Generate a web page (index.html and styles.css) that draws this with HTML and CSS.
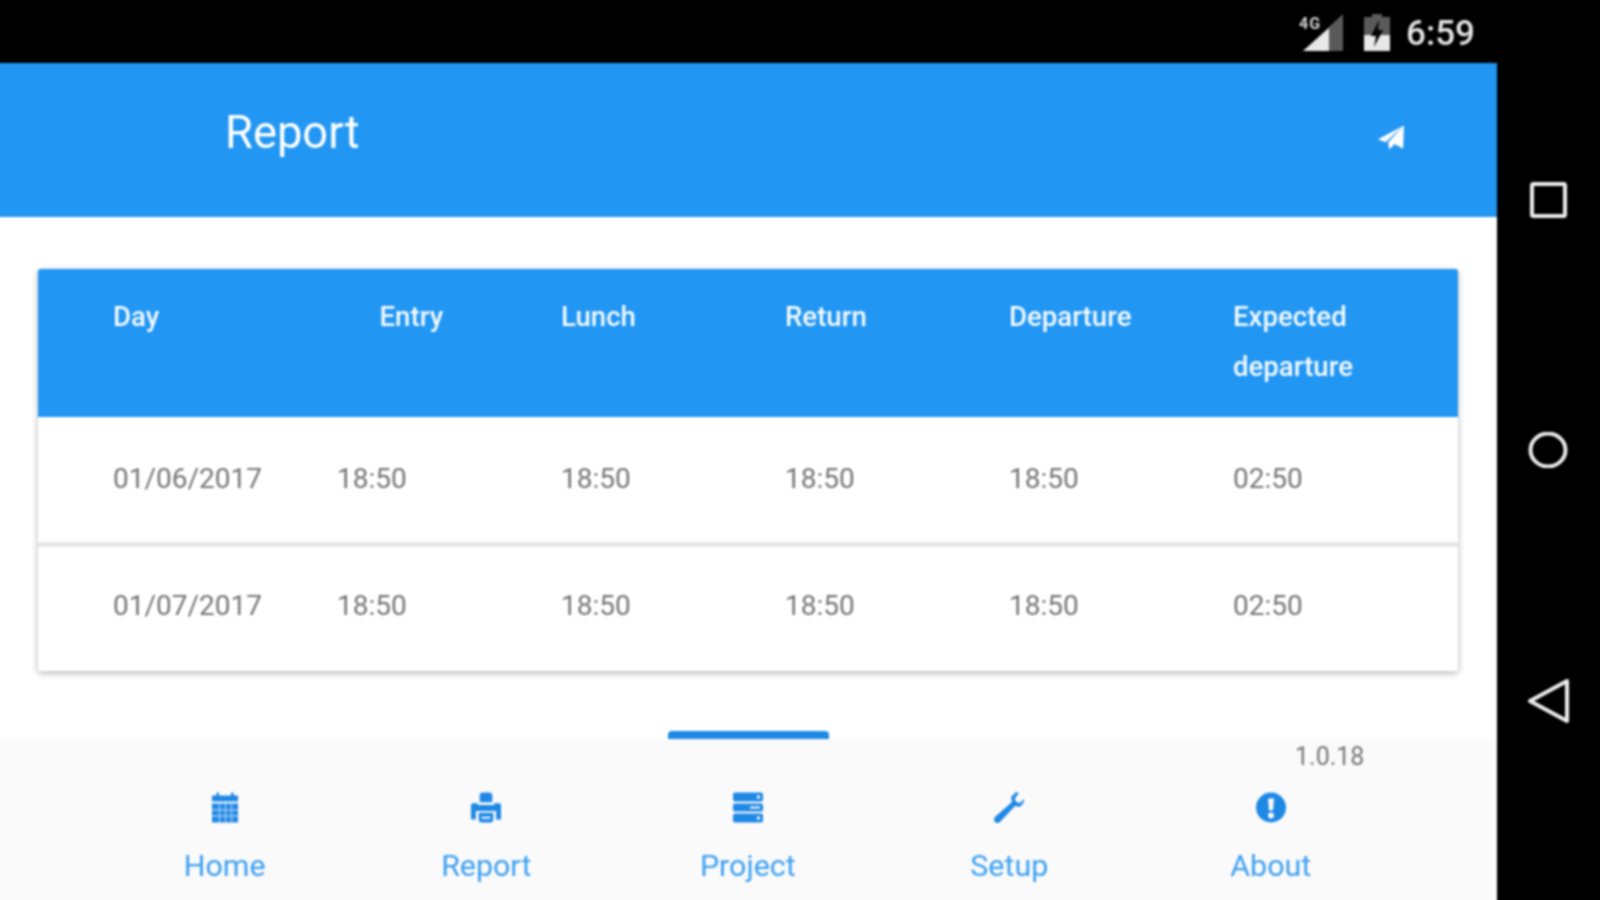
FILE: index.html
```html
<!DOCTYPE html>
<html lang="en">
<head>
<meta charset="utf-8">
<title>Report</title>
<link rel="stylesheet" href="styles.css">
</head>
<body>
<div class="device">
  <main class="screen">
    <div class="status">
      <svg class="sig" viewBox="0 0 44 37" aria-hidden="true">
        <path class="dim" d="M44 0V37H4Z"/>
        <path class="lit" d="M30 14V37H4L30 14Z"/>
        <text class="net" x="0" y="15">4G</text>
      </svg>
      <svg class="bat" viewBox="0 0 26 37" aria-hidden="true">
        <path class="dim" d="M8 0H18V3H26V37H0V3H8Z"/>
        <path class="lit" d="M0 21H26V37H0Z"/>
        <path class="bolt" d="M15 6 7 22H12L10 33 19 16H14Z"/>
      </svg>
      <span class="time">6:59</span>
    </div>
    <header class="bar">
      <h1 class="title">Report</h1>
      <svg class="send" viewBox="0 0 28 26" aria-hidden="true">
        <path d="M28 0 27 25 18 20 12 26 11 18ZM28 0 0 15 8 18Z"/>
      </svg>
    </header>
    <section class="content">
      <div class="card">
        <div class="row head">
          <div class="cell">Day</div>
          <div class="cell shift">Entry</div>
          <div class="cell">Lunch</div>
          <div class="cell">Return</div>
          <div class="cell">Departure</div>
          <div class="cell">Expected<br>departure</div>
        </div>
        <div class="row body">
          <div class="cell">01/06/2017</div>
          <div class="cell">18:50</div>
          <div class="cell">18:50</div>
          <div class="cell">18:50</div>
          <div class="cell">18:50</div>
          <div class="cell">02:50</div>
        </div>
        <div class="row body">
          <div class="cell">01/07/2017</div>
          <div class="cell">18:50</div>
          <div class="cell">18:50</div>
          <div class="cell">18:50</div>
          <div class="cell">18:50</div>
          <div class="cell">02:50</div>
        </div>
      </div>
      <div class="indicator"></div>
    </section>
    <nav class="tabs">
      <span class="version">1.0.18</span>
      <div class="tablist">
        <a class="tab">
          <svg class="icon" viewBox="0 0 30 30" aria-hidden="true">
            <path d="M2 3H6L7 0H9V3H21V0H23L24 3H28V9H2Z"/>
            <path d="M2 11H28V30H2Z"/>
            <path class="gridlines" d="M2 17.5H28M2 23.5H28M9.5 11V30M15.5 11V30M21.5 11V30"/>
          </svg>
          <span>Home</span>
        </a>
        <a class="tab">
          <svg class="icon" viewBox="0 0 31 31" aria-hidden="true">
            <path d="M9 3Q9 0 12 0H19Q22 0 22 3V10H9Z"/>
            <path d="M2 11H7V13H24V11H29Q31 11 31 13V28H26V19H5V28H0V13Q0 11 2 11Z"/>
            <path d="M8 21H23V28Q23 31 20 31H11Q8 31 8 28ZM11 25V27H20V25Z" fill-rule="evenodd"/>
          </svg>
          <span>Report</span>
        </a>
        <a class="tab">
          <svg class="icon" viewBox="0 0 30 30" aria-hidden="true">
            <path d="M2 0H28Q30 0 30 2V7Q30 9 28 9H2Q0 9 0 7V2Q0 0 2 0ZM24 3V6H27V3Z" fill-rule="evenodd"/>
            <path d="M2 11H28Q30 11 30 13V17Q30 19 28 19H2Q0 19 0 17V13Q0 11 2 11ZM17 14V16H27V14Z" fill-rule="evenodd"/>
            <path d="M2 21H28Q30 21 30 23V28Q30 30 28 30H2Q0 30 0 28V23Q0 21 2 21ZM24 24V27H27V24Z" fill-rule="evenodd"/>
          </svg>
          <span>Project</span>
        </a>
        <a class="tab">
          <svg class="icon" viewBox="0 0 30 31" aria-hidden="true">
            <path d="M22 0 17 5 18 10 1 25Q-1 28 1 30 3 32 6 30L21 14 26 15 30 10 30 7 26 11 22 10 21 6 25 1Z"/>
          </svg>
          <span>Setup</span>
        </a>
        <a class="tab">
          <svg class="icon" viewBox="0 0 30 30" aria-hidden="true">
            <path d="M15 0A15 15 0 1 1 15 30 15 15 0 1 1 15 0ZM12 6 13 18H17L18 6ZM15 20A3 3 0 1 0 15 26 3 3 0 1 0 15 20Z" fill-rule="evenodd"/>
          </svg>
          <span>About</span>
        </a>
      </div>
    </nav>
  </main>
  <aside class="softkeys">
    <svg class="key" viewBox="0 0 42 36" aria-hidden="true"><rect x="4" y="2" width="33" height="32" rx="1.5"/></svg>
    <svg class="key" viewBox="0 0 42 36" aria-hidden="true"><ellipse cx="20" cy="18" rx="17.5" ry="16.5"/></svg>
    <svg class="key back" viewBox="0 0 42 46" aria-hidden="true"><path d="M2 23 39 3V43Z"/></svg>
  </aside>
</div>
</body>
</html>
```

FILE: styles.css
```css
* { box-sizing: border-box; }
html, body { margin: 0; height: 100%; background: #000; overflow: hidden; }
body { font-family: Roboto, "Liberation Sans", sans-serif; }

/* The device bleeds 6px past the left and bottom window edges so the soft
   focus of the whole picture doesn't darken those edges. */
.device {
  display: flex;
  width: 1606px;
  height: 906px;
  margin-left: -6px;
  background: #000;
  filter: blur(1px);
}

.screen {
  width: 1503px;
  display: flex;
  flex-direction: column;
  background: #fff;
}

.status {
  height: 63px;
  flex: none;
  background: #000;
  color: #e4e4e4;
  display: flex;
  align-items: flex-start;
  justify-content: flex-end;
  padding: 14px 22px 0 0;
}
.sig { width: 44px; height: 37px; }
.bat { width: 26px; height: 37px; margin-left: 21px; }
.dim { fill: #5a5a5a; }
.lit { fill: #e8e8e8; }
.bolt { fill: #000; }
.net { font: 700 16px Roboto, sans-serif; letter-spacing: 1px; fill: #d0d0d0; }
.time {
  margin-left: 16px;
  font-size: 35px;
  font-weight: 500;
  line-height: 40px;
}

.bar {
  height: 154px;
  flex: none;
  background: #2196f3;
  display: flex;
  align-items: center;
  justify-content: space-between;
  padding: 0 93px 0 231px;
}
.title {
  margin: 0 0 15px;
  color: #fff;
  font-size: 45.3px;
  font-weight: 400;
  line-height: 52px;
}
.send { width: 26px; height: 25px; fill: #fff; margin-bottom: 6px; }

.content {
  flex: 1;
  display: flex;
  flex-direction: column;
  align-items: center;
  padding: 52px 2px 0 6px;
  min-height: 0;
}
.card {
  width: 1420px;
  border-radius: 3px;
  background: #fff;
  box-shadow: 0 2px 6px rgba(0, 0, 0, 0.3);
}
.row {
  display: grid;
  grid-template-columns: repeat(6, 224px);
  padding-left: 75.5px;
}
.head {
  height: 148px;
  padding-top: 23px;
  background: #2196f3;
  border-radius: 3px 3px 0 0;
  color: #f4faff;
  font-size: 27.6px;
  font-weight: 500;
  line-height: 50px;
}
.shift { padding-left: 42.5px; }
.body {
  height: 125px;
  align-items: start;
  padding-top: 42px;
  color: #757575;
  font-size: 28px;
  line-height: 40px;
}
.body + .body {
  height: 129px;
  border-top: 5px solid #e6e6e6;
  padding-top: 39px;
}
.indicator {
  width: 161px;
  height: 8px;
  margin: auto 0 0 2px;
  border-radius: 4px 4px 0 0;
  background: #1e88e5;
}

.tabs {
  height: 167px;
  flex: none;
  position: relative;
  background: #fafafa;
}
.version {
  position: absolute;
  top: 2px;
  left: 1301px;
  color: #757575;
  font-size: 25px;
  line-height: 32px;
}
.tablist {
  display: grid;
  grid-template-columns: repeat(5, 261.5px);
  padding: 53px 0 0 100px;
}
.tab {
  display: flex;
  flex-direction: column;
  align-items: center;
  color: #3c9ff2;
  font-size: 30.4px;
  line-height: 40px;
}
.icon { width: 30px; height: 31px; fill: #1e88e5; margin-bottom: 23px; }
.gridlines { fill: none; stroke: #fff; stroke-width: 1.4; opacity: 0.55; }

.softkeys {
  width: 103px;
  display: flex;
  flex-direction: column;
  align-items: center;
  padding-top: 182px;
}
.key {
  width: 42px;
  height: 36px;
  fill: none;
  stroke: #ececec;
  stroke-width: 4;
  stroke-linejoin: round;
  margin-bottom: 214px;
}
.key + .key { margin-bottom: 210px; }
.key.back { height: 46px; margin-bottom: 0; }
```
